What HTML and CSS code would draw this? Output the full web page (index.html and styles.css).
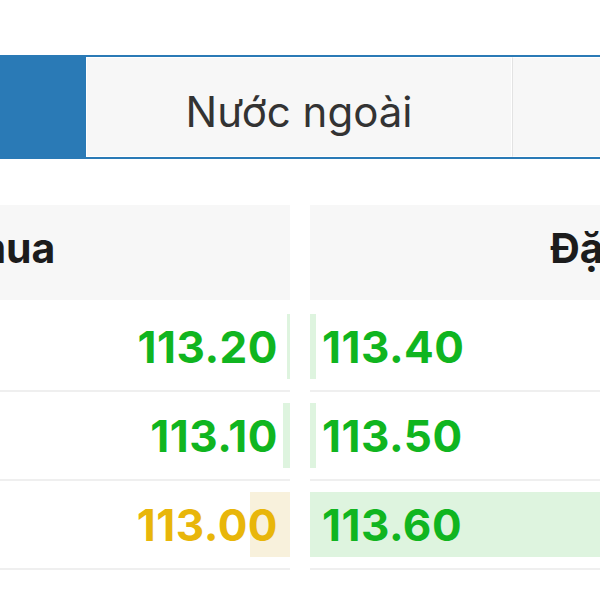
FILE: index.html
```html
<!DOCTYPE html>
<html lang="vi">
<head>
<meta charset="utf-8">
<link rel="stylesheet" href="styles.css">
</head>
<body>
<div class="tabs">
  <div class="tab active">Trong nước</div>
  <div class="tab">Nước ngoài</div>
  <div class="tab">Phái sinh</div>
</div>
<div class="book">
  <div class="side buy">
    <div class="head">Đặt mua</div>
    <div class="row"><span class="bar green" style="width:3px"></span><span class="px up">113.20</span></div>
    <div class="row"><span class="bar green" style="width:7px"></span><span class="px up">113.10</span></div>
    <div class="row"><span class="bar yellow" style="width:40px"></span><span class="px ref">113.00</span></div>
  </div>
  <div class="side sell">
    <div class="head">Đặt bán</div>
    <div class="row"><span class="bar green" style="width:6px"></span><span class="px up">113.40</span></div>
    <div class="row"><span class="bar green" style="width:6px"></span><span class="px up">113.50</span></div>
    <div class="row"><span class="bar green" style="width:634px"></span><span class="px up">113.60</span></div>
  </div>
</div>
</body>
</html>
```
FILE: styles.css
```css
html, body {
  margin: 0;
  padding: 0;
  background: #fff;
  overflow: hidden;
  font-family: Inter, "Noto Sans", sans-serif;
}
.tabs {
  display: flex;
  margin: 55px 0 0 -340px;
  width: 1278px;
  height: 100px;
  border-top: 2px solid #2a7ab6;
  border-bottom: 2px solid #2a7ab6;
}
.tab {
  flex: 0 0 426px;
  display: flex;
  align-items: center;
  justify-content: center;
  padding-top: 8px;
  background: #f7f7f7;
  border: 1px solid #fff;
  border-left: 1px solid #e3e3e3;
  box-sizing: border-box;
  font-size: 42px;
  color: #333;
}
.tab.active {
  background: #2a7ab6;
  color: #fff;
  border-color: #2a7ab6;
}
.tab.active + .tab {
  border-left-color: #fff;
}
.book {
  display: flex;
  gap: 20px;
  margin: 46px 0 0 -344px;
  width: 1288px;
}
.side {
  flex: 0 0 634px;
  display: flex;
  flex-direction: column;
}
.head {
  height: 95px;
  margin-bottom: 3px;
  padding-bottom: 10px;
  box-sizing: border-box;
  background: #f7f7f7;
  display: flex;
  align-items: center;
  justify-content: center;
  font-size: 41px;
  font-weight: 700;
  color: #1c1c1c;
}
.row {
  position: relative;
  height: 87px;
  border-bottom: 2px solid #efefef;
  display: flex;
  align-items: center;
  padding: 0 12px;
}
.buy .row { justify-content: flex-end; }
.bar {
  position: absolute;
  top: 11px;
  height: 65px;
}
.buy .bar { right: 0; }
.sell .bar { left: 0; }
.bar.green { background: #def4df; }
.bar.yellow { background: #f8f1dc; }
.px {
  position: relative;
  font-size: 44px;
  font-weight: 700;
  letter-spacing: 0.5px;
}
.up { color: #10b520; }
.ref { color: #e8b60a; }
```
